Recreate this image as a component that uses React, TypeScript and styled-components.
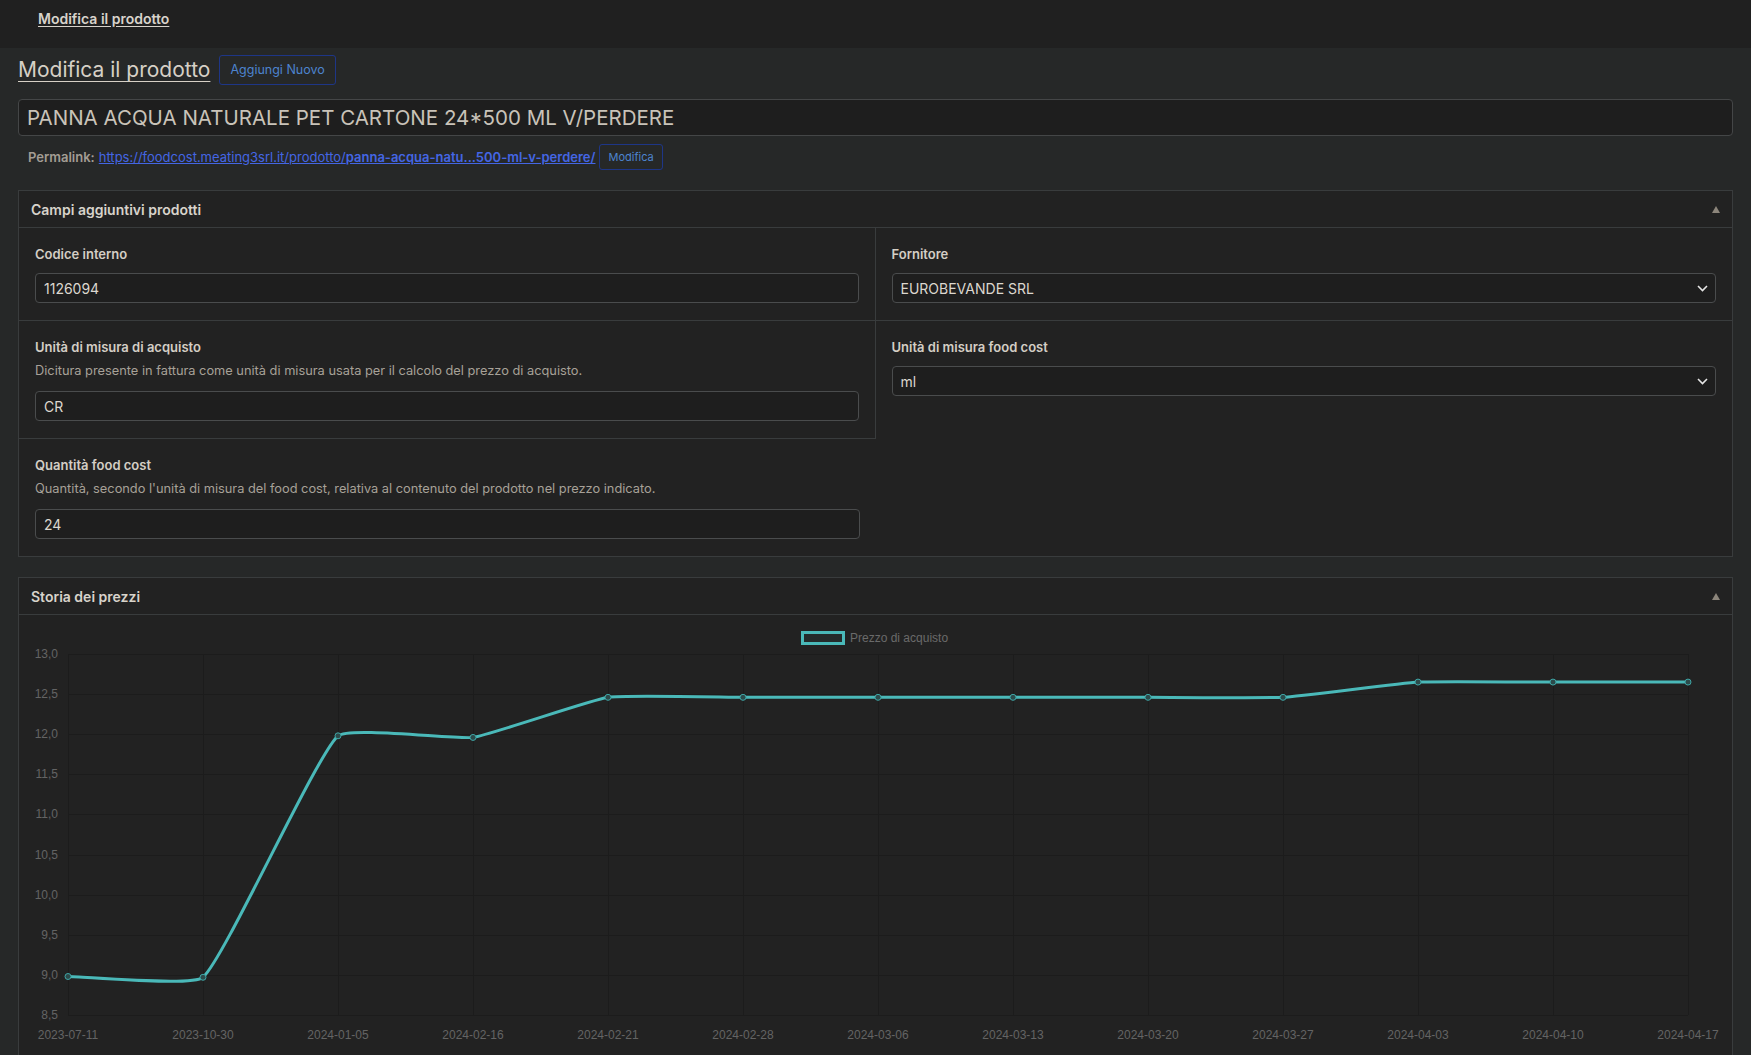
import { createGlobalStyle, styled } from 'styled-components';

const GlobalStyle = createGlobalStyle`
  html, body {
    margin: 0;
    padding: 0;
    background: #262828;
  }
  body {
    font-family: Inter, "Noto Sans", sans-serif;
    color: #d4cec5;
    font-size: 13px;
  }
  * {
    box-sizing: border-box;
  }
`;

// chart data
const dates = [
  '2023-07-11',
  '2023-10-30',
  '2024-01-05',
  '2024-02-16',
  '2024-02-21',
  '2024-02-28',
  '2024-03-06',
  '2024-03-13',
  '2024-03-20',
  '2024-03-27',
  '2024-04-03',
  '2024-04-10',
  '2024-04-17',
];
const prices = [8.98, 8.97, 11.98, 11.96, 12.46, 12.46, 12.46, 12.46, 12.46, 12.46, 12.65, 12.65, 12.65];

const CHART_W = 1713;
const CHART_H = 440;
const PLOT = { left: 49, right: 1669, top: 39, bottom: 400 };
const Y_MIN = 8.5;
const Y_MAX = 13;
const FONT = "'Liberation Sans', Arial, sans-serif";

type Pt = { x: number; y: number };

const toX = (i: number) => PLOT.left + ((PLOT.right - PLOT.left) / (dates.length - 1)) * i;
const toY = (v: number) => PLOT.bottom - ((v - Y_MIN) / (Y_MAX - Y_MIN)) * (PLOT.bottom - PLOT.top);

// spline like chart.js, low tension
function buildPath(pts: Pt[], t = 0.12) {
  const ctrl = pts.map((cur, i) => {
    const prev = i === 0 ? cur : pts[i - 1];
    const next = i === pts.length - 1 ? cur : pts[i + 1];
    const d01 = Math.hypot(cur.x - prev.x, cur.y - prev.y);
    const d12 = Math.hypot(next.x - cur.x, next.y - cur.y);
    const s01 = d01 / (d01 + d12) || 0;
    const s12 = d12 / (d01 + d12) || 0;
    const fa = t * s01;
    const fb = t * s12;
    return {
      prev: { x: cur.x - fa * (next.x - prev.x), y: cur.y - fa * (next.y - prev.y) },
      next: { x: cur.x + fb * (next.x - prev.x), y: cur.y + fb * (next.y - prev.y) },
    };
  });
  let d = `M ${pts[0].x} ${pts[0].y}`;
  for (let i = 1; i < pts.length; i++) {
    const a = ctrl[i - 1].next;
    const b = ctrl[i].prev;
    d += ` C ${a.x} ${a.y} ${b.x} ${b.y} ${pts[i].x} ${pts[i].y}`;
  }
  return d;
}

function PriceChart() {
  const pts = prices.map((v, i) => ({ x: toX(i), y: toY(v) }));
  const ticks: number[] = [];
  for (let v = Y_MAX; v >= Y_MIN - 0.001; v -= 0.5) ticks.push(v);
  return (
    <svg width={CHART_W} height={CHART_H} viewBox={`0 0 ${CHART_W} ${CHART_H}`}>
      <rect x={783.5} y={17.5} width={41} height={11} fill="rgba(75,192,192,0.06)" stroke="#4ab9b9" strokeWidth={3} />
      <text x={831} y={27} fontFamily={FONT} fontSize={12} fill="#6a6a6a">
        Prezzo di acquisto
      </text>
      {ticks.map((v) => (
        <g key={v}>
          <line
            x1={PLOT.left}
            x2={PLOT.right}
            y1={Math.round(toY(v)) + 0.5}
            y2={Math.round(toY(v)) + 0.5}
            stroke="#1c1c1c"
          />
          <text x={PLOT.left - 10} y={toY(v) + 4} textAnchor="end" fontFamily={FONT} fontSize={12} fill="#646464">
            {v.toFixed(1).replace('.', ',')}
          </text>
        </g>
      ))}
      {dates.map((d, i) => (
        <g key={d}>
          <line
            x1={Math.round(toX(i)) + 0.5}
            x2={Math.round(toX(i)) + 0.5}
            y1={PLOT.top}
            y2={PLOT.bottom}
            stroke="#1c1c1c"
          />
          <text x={toX(i)} y={424} textAnchor="middle" fontFamily={FONT} fontSize={12} fill="#646464">
            {d}
          </text>
        </g>
      ))}
      <path d={buildPath(pts)} fill="none" stroke="#4ab9b9" strokeWidth={3} />
      {pts.map((p, i) => (
        <circle key={i} cx={p.x} cy={p.y} r={3} fill="#2c4a4a" stroke="#3fa6a6" strokeWidth={1} />
      ))}
    </svg>
  );
}

export default function App() {
  return (
    <>
      <GlobalStyle />
      <S.TopBar>
        <S.TopBarLink>Modifica il prodotto</S.TopBarLink>
      </S.TopBar>
      <S.Page>
        <S.HeadingRow>
          <S.PageTitle>Modifica il prodotto</S.PageTitle>
          <S.OutlineButton $size="regular">Aggiungi Nuovo</S.OutlineButton>
        </S.HeadingRow>
        <S.TitleInput defaultValue="PANNA ACQUA NATURALE PET CARTONE 24*500 ML V/PERDERE" />
        <S.PermalinkRow>
          <S.PermalinkLabel>Permalink:</S.PermalinkLabel>
          <S.PermalinkLink href="#">
            https://foodcost.meating3srl.it/prodotto/<b>panna-acqua-natu...500-ml-v-perdere/</b>
          </S.PermalinkLink>
          <S.OutlineButton $size="small">Modifica</S.OutlineButton>
        </S.PermalinkRow>

        <S.Postbox>
          <S.PostboxHeader>
            <S.PostboxTitle>Campi aggiuntivi prodotti</S.PostboxTitle>
            <ToggleArrow />
          </S.PostboxHeader>
          <S.FieldGrid>
            <S.FieldCell $right $bottom>
              <S.FieldLabel>Codice interno</S.FieldLabel>
              <S.TextInput defaultValue="1126094" />
            </S.FieldCell>
            <S.FieldCell $bottom>
              <S.FieldLabel>Fornitore</S.FieldLabel>
              <S.SelectBox>
                EUROBEVANDE SRL
                <Chevron />
              </S.SelectBox>
            </S.FieldCell>
            <S.FieldCell $right $bottom>
              <S.FieldLabel>Unità di misura di acquisto</S.FieldLabel>
              <S.FieldDescription>
                Dicitura presente in fattura come unità di misura usata per il calcolo del prezzo di acquisto.
              </S.FieldDescription>
              <S.TextInput defaultValue="CR" />
            </S.FieldCell>
            <S.FieldCell>
              <S.FieldLabel>Unità di misura food cost</S.FieldLabel>
              <S.SelectBox>
                ml
                <Chevron />
              </S.SelectBox>
            </S.FieldCell>
            <S.FieldCell>
              <S.FieldLabel>Quantità food cost</S.FieldLabel>
              <S.FieldDescription>
                Quantità, secondo l'unità di misura del food cost, relativa al contenuto del prodotto nel prezzo
                indicato.
              </S.FieldDescription>
              <S.TextInput defaultValue="24" />
            </S.FieldCell>
          </S.FieldGrid>
        </S.Postbox>

        <S.Postbox>
          <S.PostboxHeader>
            <S.PostboxTitle>Storia dei prezzi</S.PostboxTitle>
            <ToggleArrow />
          </S.PostboxHeader>
          <S.ChartWrap>
            <PriceChart />
          </S.ChartWrap>
        </S.Postbox>
      </S.Page>
    </>
  );
}

function ToggleArrow() {
  return (
    <svg width="8" height="7" viewBox="0 0 8 7">
      <polygon points="4,0 8,7 0,7" fill="#8c857b" />
    </svg>
  );
}

function Chevron() {
  return (
    <svg width="11" height="7" viewBox="0 0 11 7">
      <polyline points="1,1 5.5,5.5 10,1" fill="none" stroke="#e6e6e6" strokeWidth="1.6" />
    </svg>
  );
}

const S = {
  TopBar: styled.div`
    height: 48px;
    background: #202020;
    padding: 10px 38px 0;
  `,
  TopBarLink: styled.a`
    font-size: 14px;
    font-weight: 600;
    line-height: 18px;
    color: #d8d3cb;
    text-decoration: underline;
    text-underline-offset: 2px;
  `,
  Page: styled.div`
    padding: 0 18px;
  `,
  HeadingRow: styled.div`
    display: flex;
    align-items: center;
    gap: 9px;
    margin-top: 7px;
    height: 30px;
  `,
  PageTitle: styled.h1`
    margin: 0;
    font-size: 21px;
    font-weight: 400;
    line-height: 30px;
    color: #d6d0c6;
    text-decoration: underline;
    text-decoration-thickness: 1px;
    text-underline-offset: 4px;
  `,
  OutlineButton: styled.button<{ $size: 'regular' | 'small' }>`
    font-family: inherit;
    background: transparent;
    border: 1px solid #1e3687;
    border-radius: 3px;
    color: #4d84cf;
    height: ${(p) => (p.$size === 'small' ? '26px' : '30px')};
    padding: ${(p) => (p.$size === 'small' ? '0 8px' : '0 10px')};
    font-size: ${(p) => (p.$size === 'small' ? '11px' : '12.5px')};
    line-height: 1;
    cursor: pointer;
  `,
  TitleInput: styled.input`
    display: block;
    width: 100%;
    margin-top: 14px;
    height: 37px;
    padding: 0 8px;
    font-family: inherit;
    font-size: 20.5px;
    color: #c9c3b9;
    background: #1e1e1e;
    border: 1px solid #444647;
    border-radius: 4px;
    outline: none;
  `,
  PermalinkRow: styled.div`
    display: flex;
    align-items: center;
    gap: 4px;
    margin-top: 8px;
    height: 26px;
    padding-left: 10px;
    font-size: 13px;
  `,
  PermalinkLabel: styled.strong`
    color: #a39d94;
    font-weight: 600;
  `,
  PermalinkLink: styled.a`
    color: #4466e4;
    text-decoration: underline;
    b {
      font-weight: 600;
    }
  `,
  Postbox: styled.section`
    margin-top: 20px;
    background: #222222;
    border: 1px solid #393c3d;
  `,
  PostboxHeader: styled.div`
    display: flex;
    align-items: center;
    justify-content: space-between;
    height: 37px;
    padding: 0 12px;
    border-bottom: 1px solid #393c3d;
  `,
  PostboxTitle: styled.h2`
    margin: 0;
    font-size: 14px;
    font-weight: 600;
    color: #d8d3cb;
  `,
  FieldGrid: styled.div`
    display: grid;
    grid-template-columns: 1fr 1fr;
  `,
  FieldCell: styled.div<{ $right?: boolean; $bottom?: boolean }>`
    padding: 16px 16px 17px;
    border-right: ${(p) => (p.$right ? '1px solid #393c3d' : 'none')};
    border-bottom: ${(p) => (p.$bottom ? '1px solid #393c3d' : 'none')};
  `,
  FieldLabel: styled.label`
    display: block;
    font-size: 13px;
    font-weight: 600;
    line-height: 20px;
    color: #d4cec5;
    margin-bottom: 9px;
  `,
  FieldDescription: styled.p`
    margin: -4px 0 11px;
    font-size: 12.8px;
    line-height: 18px;
    color: #a7a198;
  `,
  TextInput: styled.input`
    display: block;
    width: 100%;
    height: 30px;
    padding: 0 8px;
    font-family: inherit;
    font-size: 14px;
    color: #dcd7cf;
    background: #1e1e1e;
    border: 1px solid #4a4c4d;
    border-radius: 4px;
    outline: none;
  `,
  SelectBox: styled.div`
    display: flex;
    align-items: center;
    justify-content: space-between;
    height: 30px;
    padding: 0 7px 0 8px;
    font-size: 14px;
    color: #dcd7cf;
    background: #1e1e1e;
    border: 1px solid #4a4c4d;
    border-radius: 4px;
  `,
  ChartWrap: styled.div`
    display: flex;
  `,
};
